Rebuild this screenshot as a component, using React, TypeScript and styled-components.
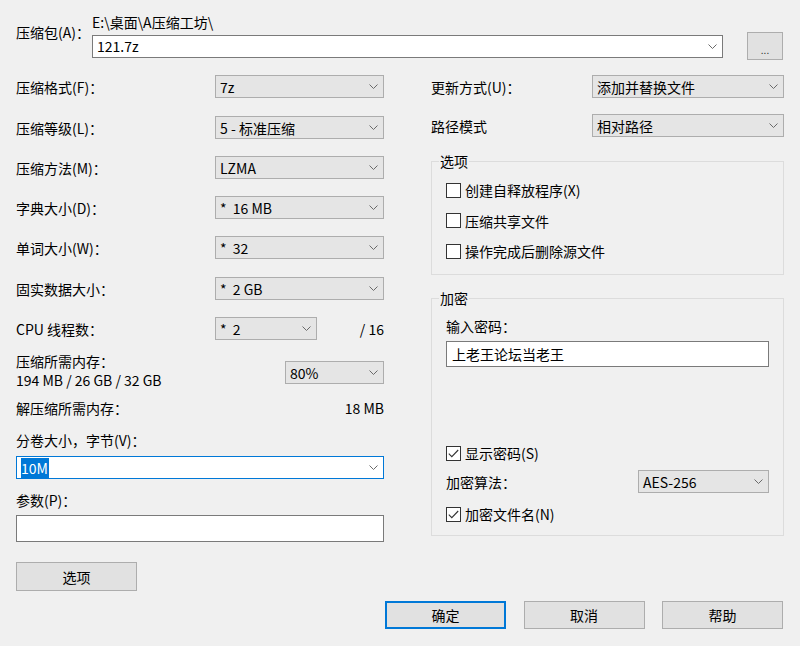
import styled, { createGlobalStyle } from 'styled-components'

const GlobalStyle = createGlobalStyle`
  html, body {
    margin: 0;
    padding: 0;
    background: #f0f0f0;
  }
  body {
    font-family: "Noto Sans CJK SC", "Noto Sans", sans-serif;
    font-size: 14px;
    color: #000;
  }
`

const Dialog = styled.div`
  width: 800px;
  height: 646px;
  box-sizing: border-box;
  padding-top: 14px;
  background: #f0f0f0;
  overflow: hidden;
`

// top: archive path + name
const ArchiveRow = styled.div`
  display: flex;
  padding: 0 17px 0 16px;
`
const ArchiveLabel = styled.div`
  width: 76px;
  flex-shrink: 0;
  margin-top: 10px;
  line-height: 16px;
`
const ArchiveBody = styled.div`
  flex: 1;
  display: flex;
  flex-direction: column;
`
const PathText = styled.div`
  line-height: 16px;
`
const PickRow = styled.div`
  display: flex;
  align-items: center;
  gap: 24px;
  margin-top: 2px;
`

const Main = styled.div`
  display: grid;
  grid-template-columns: 368px 353px;
  column-gap: 47px;
  align-items: start;
  padding: 0 16px;
  margin-top: 15px;
`
const Column = styled.div`
  display: flex;
  flex-direction: column;
`

const FieldRow = styled.div<{ $mt?: number; $cols?: string }>`
  display: grid;
  grid-template-columns: ${(p) => p.$cols ?? '199px 1fr'};
  align-items: center;
  height: 23px;
  margin-top: ${(p) => p.$mt ?? 0}px;
`
const Label = styled.div<{ $mt?: number; $right?: boolean }>`
  line-height: 16px;
  white-space: nowrap;
  margin-top: ${(p) => p.$mt ?? 0}px;
  text-align: ${(p) => (p.$right ? 'right' : 'left')};
`
const SplitLine = styled.div<{ $mt?: number }>`
  display: flex;
  justify-content: space-between;
  line-height: 16px;
  margin-top: ${(p) => p.$mt ?? 0}px;
`

const ComboBox = styled.div<{ $edit?: boolean; $focus?: boolean; $w?: number; $h?: number; $mt?: number }>`
  box-sizing: border-box;
  width: ${(p) => (p.$w ? `${p.$w}px` : '100%')};
  height: ${(p) => p.$h ?? 23}px;
  margin-top: ${(p) => p.$mt ?? 0}px;
  display: flex;
  align-items: center;
  padding: 0 5px 0 3px;
  background: ${(p) => (p.$edit ? '#ffffff' : '#e5e5e5')};
  border: 1px solid ${(p) => (p.$focus ? '#0078d7' : p.$edit ? '#7a7a7a' : '#adadad')};
  line-height: 16px;
`
const ComboText = styled.span`
  flex: 1;
  white-space: pre;
  padding-left: 1px;
`
const Selected = styled.span`
  background: #0078d7;
  color: #fff;
  line-height: 18px;
  padding: 0 1px 0 0;
`

const TextBox = styled.div<{ $h: number; $mt?: number }>`
  box-sizing: border-box;
  height: ${(p) => p.$h}px;
  margin-top: ${(p) => p.$mt ?? 0}px;
  background: #fff;
  border: 1px solid #7a7a7a;
  padding: 0 5px;
  display: flex;
  align-items: center;
  line-height: 16px;
`

const PushButton = styled.button<{ $primary?: boolean; $w?: number; $h?: number; $mt?: number }>`
  box-sizing: border-box;
  width: ${(p) => p.$w ?? 121}px;
  height: ${(p) => p.$h ?? 28}px;
  margin-top: ${(p) => p.$mt ?? 0}px;
  padding: 0;
  background: #e1e1e1;
  border: 1px solid ${(p) => (p.$primary ? '#0078d7' : '#adadad')};
  box-shadow: ${(p) => (p.$primary ? 'inset 0 0 0 1px #0078d7' : 'none')};
  font-family: inherit;
  font-size: 14px;
  color: #000;
  flex-shrink: 0;
`
const DotsButton = styled(PushButton)`
  font-size: 10px;
  padding-top: 6px;
  color: #333;
`

const MemBlock = styled.div`
  display: grid;
  grid-template-columns: 1fr 99px;
  align-items: start;
  margin-top: 13px;
`
const MemText = styled.div`
  display: flex;
  flex-direction: column;
  gap: 3px;
  line-height: 16px;
`

const Group = styled.fieldset<{ $mt: number; $pb: number }>`
  margin: ${(p) => p.$mt}px 0 0;
  padding: 0 14px ${(p) => p.$pb}px;
  border: 1px solid #dcdcdc;
  min-width: 0;
`
const GroupTitle = styled.legend`
  margin-left: -7px;
  padding: 0 1px;
  line-height: 16px;
`
const GroupBody = styled.div`
  display: flex;
  flex-direction: column;
`

const CheckRow = styled.div<{ $mt?: number }>`
  display: flex;
  align-items: center;
  gap: 4px;
  height: 16px;
  line-height: 16px;
  margin-top: ${(p) => p.$mt ?? 0}px;
`
const CheckSquare = styled.span`
  box-sizing: border-box;
  width: 15px;
  height: 15px;
  border: 1px solid #333;
  background: #fff;
  display: flex;
  align-items: center;
  justify-content: center;
  flex-shrink: 0;
`

const Footer = styled.div`
  display: flex;
  justify-content: flex-end;
  gap: 17.5px;
  padding-right: 17px;
  margin-top: 10px;
`

const Chevron = () => (
  <svg width="9" height="5" viewBox="0 0 9 5">
    <path d="M0.5 0.5 L4.5 4.5 L8.5 0.5" fill="none" stroke="#6a6a6a" strokeWidth="1" />
  </svg>
)

type ComboProps = {
  text: React.ReactNode
  edit?: boolean
  focus?: boolean
  w?: number
  mt?: number
}

const Combo = ({ text, edit, focus, w, mt }: ComboProps) => (
  <ComboBox $edit={edit} $focus={focus} $w={w} $mt={mt}>
    <ComboText>{text}</ComboText>
    <Chevron />
  </ComboBox>
)

const Check = ({ label, checked, mt }: { label: string; checked?: boolean; mt?: number }) => (
  <CheckRow $mt={mt}>
    <CheckSquare>
      {checked && (
        <svg width="11" height="9" viewBox="0 0 11 9">
          <path d="M0.8 4.6 L3.8 7.6 L10.2 1" fill="none" stroke="#333" strokeWidth="1.1" />
        </svg>
      )}
    </CheckSquare>
    {label}
  </CheckRow>
)

const leftRows = [
  { label: '压缩格式(F)：', value: '7z' },
  { label: '压缩等级(L)：', value: '5 - 标准压缩' },
  { label: '压缩方法(M)：', value: 'LZMA' },
  { label: '字典大小(D)：', value: '*  16 MB' },
  { label: '单词大小(W)：', value: '*  32' },
  { label: '固实数据大小：', value: '*  2 GB' },
]
const rowGaps = [0, 18, 17, 17, 17, 18]

export default function App() {
  return (
    <>
      <GlobalStyle />
      <Dialog>
        <ArchiveRow>
          <ArchiveLabel>压缩包(A)：</ArchiveLabel>
          <ArchiveBody>
            <PathText>E:\桌面\A压缩工坊\</PathText>
            <PickRow>
              <Combo text="121.7z" edit />
              <DotsButton $w={36} $h={28}>...</DotsButton>
            </PickRow>
          </ArchiveBody>
        </ArchiveRow>

        <Main>
          <Column>
            {leftRows.map((r, i) => (
              <FieldRow key={r.label} $mt={rowGaps[i]}>
                <Label>{r.label}</Label>
                <Combo text={r.value} />
              </FieldRow>
            ))}
            <FieldRow $mt={17} $cols="199px 102px 1fr">
              <Label>CPU 线程数：</Label>
              <Combo text="*  2" />
              <Label $right>/ 16</Label>
            </FieldRow>

            <MemBlock>
              <MemText>
                <span>压缩所需内存：</span>
                <span>194 MB / 26 GB / 32 GB</span>
              </MemText>
              <Combo text="80%" mt={8} />
            </MemBlock>

            <SplitLine $mt={12}>
              <span>解压缩所需内存：</span>
              <span>18 MB</span>
            </SplitLine>

            <Label $mt={16}>分卷大小，字节(V)：</Label>
            <Combo text={<Selected>10M</Selected>} edit focus mt={8} />

            <Label $mt={13}>参数(P)：</Label>
            <TextBox $h={27} $mt={7} />

            <PushButton $w={121} $h={29} $mt={20}>选项</PushButton>
          </Column>

          <Column>
            <FieldRow $cols="161px 1fr">
              <Label>更新方式(U)：</Label>
              <Combo text="添加并替换文件" />
            </FieldRow>
            <FieldRow $cols="161px 1fr" $mt={16}>
              <Label>路径模式</Label>
              <Combo text="相对路径" />
            </FieldRow>

            <Group $mt={16} $pb={15}>
              <GroupTitle>选项</GroupTitle>
              <GroupBody>
                <Check label="创建自释放程序(X)" mt={13} />
                <Check label="压缩共享文件" mt={14.5} />
                <Check label="操作完成后删除源文件" mt={14.5} />
              </GroupBody>
            </Group>

            <Group $mt={15} $pb={13}>
              <GroupTitle>加密</GroupTitle>
              <GroupBody>
                <Label $mt={12}>输入密码：</Label>
                <TextBox $h={26} $mt={7}>上老王论坛当老王</TextBox>
                <Check label="显示密码(S)" checked mt={78} />
                <FieldRow $cols="192px 131px" $mt={9}>
                  <Label>加密算法：</Label>
                  <Combo text="AES-256" />
                </FieldRow>
                <Check label="加密文件名(N)" checked mt={13} />
              </GroupBody>
            </Group>
          </Column>
        </Main>

        <Footer>
          <PushButton $primary>确定</PushButton>
          <PushButton>取消</PushButton>
          <PushButton>帮助</PushButton>
        </Footer>
      </Dialog>
    </>
  )
}
